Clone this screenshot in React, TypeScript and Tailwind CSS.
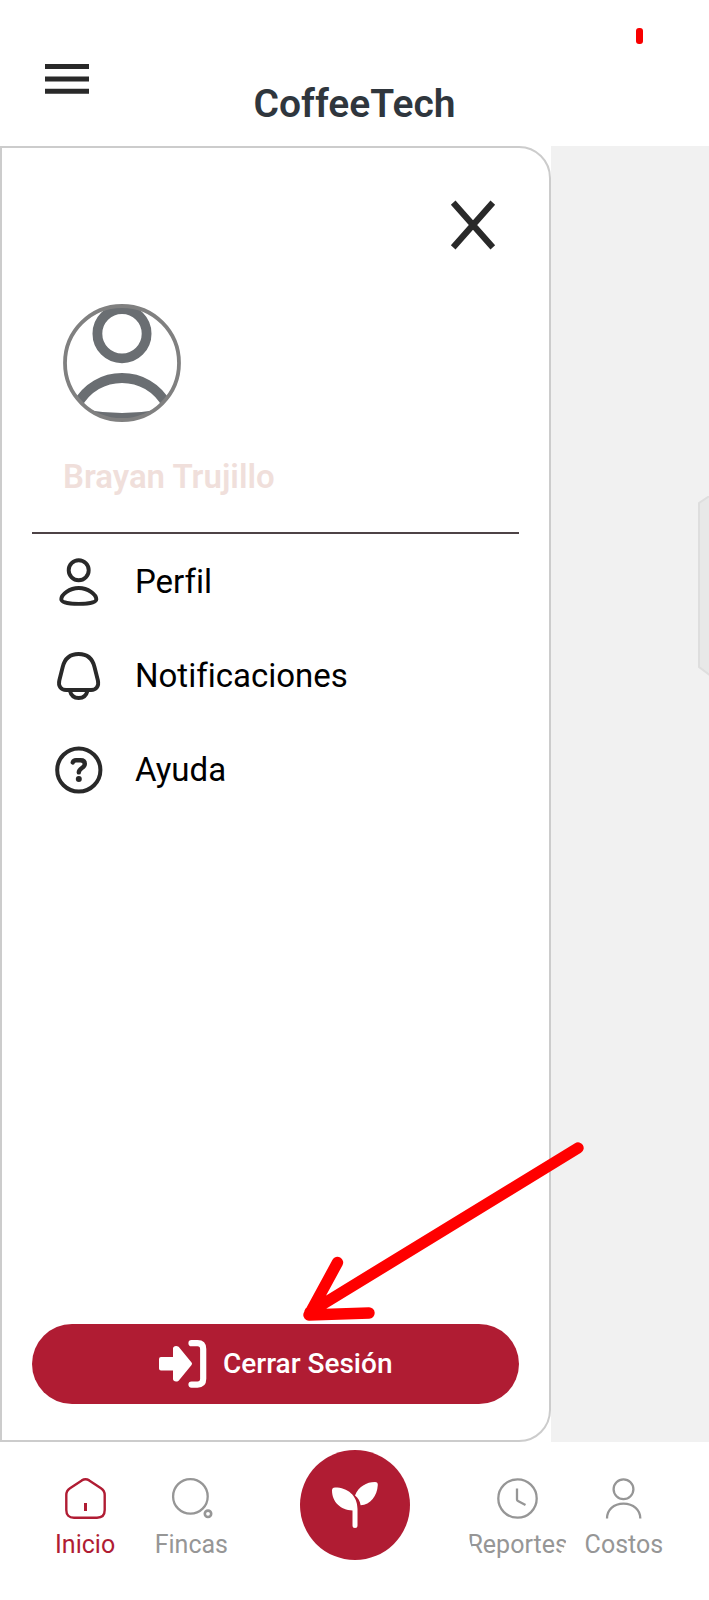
import type { ReactNode } from "react";

function MenuItem({ icon, label }: { icon: ReactNode; label: string }) {
  return (
    <li>
      <a href="#" className="flex h-12 items-center gap-8 text-[33px] leading-10 text-black">
        {icon}
        <span>{label}</span>
      </a>
    </li>
  );
}

function NavItem({ icon, label, active = false }: { icon: ReactNode; label: string; active?: boolean }) {
  return (
    <a
      href="#"
      className={
        active
          ? "flex h-[100px] w-[100px] flex-col items-center gap-3 justify-self-center overflow-hidden rounded-[40px] pt-2 text-[25px] leading-7 text-[#b01c33]"
          : "flex h-[100px] w-[100px] flex-col items-center gap-3 justify-self-center overflow-hidden rounded-[40px] pt-2 text-[25px] leading-7 text-[#969696]"
      }
    >
      {icon}
      <span>{label}</span>
    </a>
  );
}

const menuIcon = "h-12 w-12 shrink-0 text-[#292929]";
const navIcon = "h-[41px] w-[41px] shrink-0 overflow-visible";

export default function App() {
  return (
    <div className="flex min-h-screen flex-col bg-white font-['Roboto',sans-serif] [font-variant-ligatures:none]">
      <header className="relative grid h-[146px] grid-cols-[1fr_auto_1fr] items-start px-11">
        <button type="button" aria-label="Menú" className="mt-16 w-fit">
          <svg viewBox="0 0 46 30" className="h-[30px] w-[46px]" stroke="#292929" strokeWidth="5">
            <path d="M1 2.5H45M1 15H45M1 27.3H45" />
          </svg>
        </button>
        <h1 className="mt-[82px] text-[39px] leading-[44px] font-semibold text-[#2f363d]">CoffeeTech</h1>
        <span className="absolute top-7 right-[66px] h-4 w-[7px] rounded-[3px] bg-[#f80000]" />
      </header>

      <main className="flex flex-1 bg-white">
        <aside className="relative z-10 flex w-7/9 flex-col rounded-r-[32px] border-2 border-[#cccccc] bg-white px-[30px] pb-9">
          <button type="button" aria-label="Cerrar menú" className="mt-[53px] mr-6 self-end">
            <svg viewBox="0 0 44 48" className="h-12 w-11 overflow-visible" stroke="#292929" strokeWidth="6.2">
              <path d="M2.2 1.6L41.8 46.4M41.8 1.6L2.2 46.4" />
            </svg>
          </button>

          <div className="mt-[55px] flex flex-col gap-8 px-[31px]">
            <svg viewBox="0 0 118 118" className="h-[118px] w-[118px]" fill="none">
              <clipPath id="avatar">
                <circle cx="59" cy="59" r="58" />
              </clipPath>
              <g clipPath="url(#avatar)" stroke="#6a6e72" strokeWidth="9.8">
                <circle cx="59" cy="29.7" r="24.6" />
                <path d="M14 101C24 83 41 74 59 74S94 83 104 101" />
                <path d="M24 106Q59 112 94 106V120H24Z" fill="#6a6e72" stroke="none" />
              </g>
              <circle cx="59" cy="59" r="57" stroke="#808080" strokeWidth="3.8" />
            </svg>
            <p className="text-[33px] leading-[46px] font-semibold text-[#f0dfdb]">Brayan Trujillo</p>
          </div>

          <hr className="mt-8 border-t-2 border-[#4d4346]" />

          <nav aria-label="Cuenta">
            <ul className="mt-6 flex flex-col gap-[46px] px-[23px]">
              <MenuItem
                label="Perfil"
                icon={
                  <svg viewBox="0 0 48 48" className={menuIcon} fill="none" stroke="currentColor" strokeWidth="3.9">
                    <circle cx="23.7" cy="12.2" r="10" />
                    <path d="M23.8 30C14.5 30 6.3 36.5 6.3 41.3C6.3 45 16 45.9 23.8 45.9S41.3 45 41.3 41.3C41.3 36.5 33 30 23.8 30Z" />
                  </svg>
                }
              />
              <MenuItem
                label="Notificaciones"
                icon={
                  <svg viewBox="0 0 48 48" className={menuIcon} fill="none" stroke="currentColor" strokeWidth="3.9">
                    <path d="M23.6 2C15 2 9.6 7 7.7 15L4.3 28.5C3 34 6 38 11.2 38H36C41.2 38 44.2 34 42.9 28.5L39.5 15C37.6 7 32.2 2 23.6 2Z" />
                    <path d="M14.8 38.5C16 43.5 19.3 46 23.7 46S31.4 43.5 32.6 38.5" />
                  </svg>
                }
              />
              <MenuItem
                label="Ayuda"
                icon={
                  <svg viewBox="0 0 48 48" className={menuIcon} fill="none" stroke="currentColor" strokeWidth="4">
                    <circle cx="23.8" cy="24" r="21.6" />
                    <path
                      d="M17.8 16.4Q18.5 14.3 21 14.3H25.5Q29.8 14.3 29.8 18C29.8 22 23.8 22 23.8 26.4"
                      strokeLinecap="round"
                      strokeWidth="4.4"
                    />
                    <circle cx="23.8" cy="33" r="3" fill="currentColor" stroke="none" />
                  </svg>
                }
              />
            </ul>
          </nav>

          <div className="relative mt-auto">
            <svg
              viewBox="0 0 290 184"
              className="absolute bottom-full left-[268px] h-[184px] w-[290px]"
              fill="none"
              stroke="#ff0000"
              strokeWidth="11.4"
              strokeLinecap="round"
              strokeLinejoin="round"
              aria-hidden="true"
            >
              <path d="M278 8L10 172M37.5 122.500L9 175L69 173" />
            </svg>
            <button
              type="button"
              className="flex h-20 w-full items-center justify-center gap-4 rounded-full bg-[#b01c33] text-[28px] leading-8 font-medium text-white"
            >
              <svg viewBox="0 0 48 48" className="h-12 w-12" fill="none" stroke="currentColor" strokeLinecap="round" strokeLinejoin="round">
                <path d="M2 19H16V8.5Q17 7.5 18.5 8.5L31 23.8L18.5 39Q17 40 16 39V28.5H2Z" fill="currentColor" strokeWidth="4" />
                <path d="M32.5 3.2H38.5Q44.2 3.2 44.2 9V38.8Q44.2 44.6 38.5 44.6H32.5" strokeWidth="6.2" />
              </svg>
              <span>Cerrar Sesión</span>
            </button>
          </div>
        </aside>

        <div className="relative flex-1 bg-[#f1f1f1]">
          <svg viewBox="0 0 11 180" className="absolute top-[350px] right-0 h-[180px] w-[11px]" fill="#e8e8e8" stroke="#dedede" strokeWidth="2">
            <path d="M13 -1L1 7V171L13 180" />
          </svg>
        </div>
      </main>

      <nav aria-label="Principal" className="grid h-[158px] grid-cols-[1fr_1fr_220px_1fr_1fr] items-start px-8 pt-7">
        <NavItem
          active
          label="Inicio"
          icon={
            <svg viewBox="0 0 41 41" className={navIcon} fill="none" stroke="currentColor" strokeWidth="2.4">
              <path d="M16.8 2.4Q20.5 0.2 24.2 2.4L36 10.2Q39.7 12.6 39.7 17V32Q39.7 39.7 32 39.7H9Q1.3 39.7 1.3 32V17Q1.3 12.6 5 10.2Z" />
              <path d="M20.5 25V33" strokeWidth="3" />
            </svg>
          }
        />
        <NavItem
          label="Fincas"
          icon={
            <svg viewBox="0 0 41 41" className={navIcon} fill="none" stroke="currentColor" strokeWidth="2.3">
              <circle cx="19.4" cy="18.4" r="17.3" />
              <circle cx="37" cy="35.8" r="3.2" strokeWidth="2.6" />
            </svg>
          }
        />
        <button
          type="button"
          aria-label="Cultivos"
          className="-mt-5 flex h-[110px] w-[110px] items-center justify-center justify-self-center rounded-full bg-[#b01c33]"
        >
          <svg viewBox="0 0 46 46" className="h-[46px] w-[46px]" fill="#ffffff">
            <path d="M0 8.5Q0 5.6 3 5.6C15.500 5.600 25.500 13.500 25.500 27V43.500Q25.500 46 23 46T20.500 43.500V28.400C8.500 28.400 0 19.500 0 8.500Z" />
            <path d="M23 13.500C26.500 4.500 34.500 0 43 0Q46 0 45.800 3C45.200 14 38.500 22.800 28.600 23.200C28 19 26.200 16 23 13.500Z" />
          </svg>
        </button>
        <NavItem
          label="Reportes"
          icon={
            <svg viewBox="0 0 41 41" className={navIcon} fill="none" stroke="currentColor" strokeWidth="2.3">
              <circle cx="20.500" cy="20.500" r="19.2" />
              <path d="M20 10.500V21.500Q20 22.500 21 23L28.500 27" />
            </svg>
          }
        />
        <NavItem
          label="Costos"
          icon={
            <svg viewBox="0 0 41 41" className={navIcon} fill="none" stroke="currentColor" strokeWidth="2.3">
              <circle cx="20.500" cy="11.200" r="9.900" />
              <path d="M4 40.500C4 32 10.500 25.700 20.500 25.700S37.300 32 37.300 40.500" />
            </svg>
          }
        />
      </nav>
    </div>
  );
}
